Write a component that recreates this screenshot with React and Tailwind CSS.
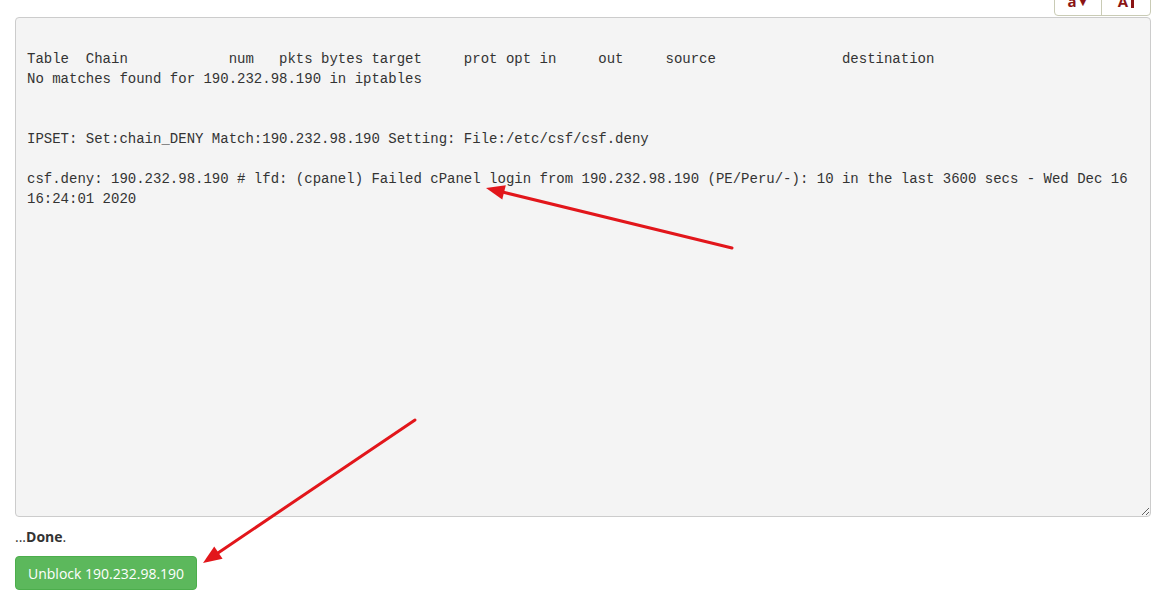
import React from 'react';

const output = `
Table  Chain            num   pkts bytes target     prot opt in     out     source               destination
No matches found for 190.232.98.190 in iptables


IPSET: Set:chain_DENY Match:190.232.98.190 Setting: File:/etc/csf/csf.deny

csf.deny: 190.232.98.190 # lfd: (cpanel) Failed cPanel login from 190.232.98.190 (PE/Peru/-): 10 in the last 3600 secs - Wed Dec 16 16:24:01 2020`;

function Arrow({ x1, y1, x2, y2 }) {
  // tip is at x2,y2
  const a = Math.atan2(y2 - y1, x2 - x1);
  const len = 20;
  const w = 0.38;
  const p1 = [x2 - len * Math.cos(a - w), y2 - len * Math.sin(a - w)];
  const p2 = [x2 - len * Math.cos(a + w), y2 - len * Math.sin(a + w)];
  const bx = x2 - 14 * Math.cos(a);
  const by = y2 - 14 * Math.sin(a);
  return (
    <g>
      <line x1={x1} y1={y1} x2={bx} y2={by} stroke="#e2161b" strokeWidth="3" strokeLinecap="round" />
      <polygon points={`${x2},${y2} ${p1[0]},${p1[1]} ${p2[0]},${p2[1]}`} fill="#e2161b" />
    </g>
  );
}

export default function App() {
  return (
    <div className="relative w-full h-[601px] overflow-hidden bg-white pl-[15px] pr-[2px] text-[#333]" style={{ fontFamily: '"Open Sans", sans-serif' }}>
      <div className="flex justify-end">
        <div className="-mt-[14px] flex h-[30px] rounded-b-[4px] border border-[#c9cbb5] bg-white text-[#8b1414]">
          <div className="flex w-[47px] items-center justify-center border-r border-[#c9cbb5] text-[15px] font-bold leading-none">
            a<span className="ml-[1px] text-[11px]">▼</span>
          </div>
          <div className="flex w-[48px] items-center justify-center text-[15px] font-bold leading-none">
            A<span className="ml-[3px] inline-block h-[14px] w-[3px] bg-[#8b1414]"></span>
          </div>
        </div>
      </div>
      <textarea
        readOnly
        defaultValue={output}
        className="mt-[1px] block h-[500px] w-full resize overflow-hidden rounded-[4px] border border-[#cccccc] bg-[#f4f4f4] px-[11px] pt-[11px] text-[14px] leading-[20px] text-[#333] outline-none"
        style={{ fontFamily: '"Liberation Mono", "Courier New", monospace' }}
      />
      <div className="mt-[10px] text-[14px] leading-[20px]">
        ...<span className="font-bold">Done</span>.
      </div>
      <button className="mt-[9px] h-[34px] rounded-[4px] border border-[#4cae4c] bg-[#5cb85c] px-[12px] text-[14px] text-white">
        Unblock 190.232.98.190
      </button>
      <svg className="pointer-events-none absolute left-0 top-0" width="1153" height="601">
        <Arrow x1={732} y1={248} x2={486} y2={188} />
        <Arrow x1={415} y1={420} x2={203} y2={563} />
      </svg>
    </div>
  );
}
